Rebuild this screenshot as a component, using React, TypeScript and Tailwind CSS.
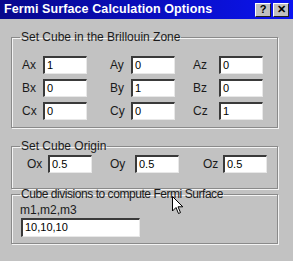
const rows = [
  [
    ["Ax", "1"],
    ["Ay", "0"],
    ["Az", "0"],
  ],
  [
    ["Bx", "0"],
    ["By", "1"],
    ["Bz", "0"],
  ],
  [
    ["Cx", "0"],
    ["Cy", "0"],
    ["Cz", "1"],
  ],
];

function Field({ value, className = "w-[44px] h-[18px]" }: { value: string; className?: string }) {
  return (
    <div
      className={`bg-white border-t-2 border-l-2 border-t-[#3a3a3a] border-l-[#3a3a3a] border-b border-r border-b-[#e8e8e8] border-r-[#e8e8e8] pl-[2px] text-[11px] leading-[15px] text-black ${className}`}
    >
      {value}
    </div>
  );
}

function Group({
  title,
  className,
  legendClass = "",
  children,
}: {
  title: string;
  className: string;
  legendClass?: string;
  children: React.ReactNode;
}) {
  return (
    <fieldset
      className={`mx-[11px] w-[267px] border border-[#8a8a8a] shadow-[1px_1px_0_#f4f4f4,inset_1px_1px_0_#f4f4f4] ${className}`}
    >
      <legend className={`ml-[8px] px-[1px] text-[12px] leading-[12px] text-[#1a1a1a] ${legendClass}`}>{title}</legend>
      {children}
    </fieldset>
  );
}

function TitleButton({ children }: { children: React.ReactNode }) {
  return (
    <div className="w-[16px] h-[14px] bg-[#c0c0c0] border border-t-white border-l-white border-b-[#202020] border-r-[#202020] flex items-center justify-center text-[11px] font-bold leading-none text-black">
      {children}
    </div>
  );
}

export default function App() {
  return (
    <div
      className="relative w-[293px] h-[261px] overflow-hidden bg-[#c2c2c2]"
      style={{ fontFamily: '"Liberation Sans", Arial, sans-serif' }}
    >
      <div className="h-[19px] flex items-center justify-between pl-[4px] pr-[4px] bg-gradient-to-r from-[#08088c] to-[#0a14f0]">
        <span className="text-white font-bold text-[12.5px] tracking-[0.1px]">Fermi Surface Calculation Options</span>
        <div className="flex gap-[2px]">
          <TitleButton>?</TitleButton>
          <TitleButton>✕</TitleButton>
        </div>
      </div>

      <div className="flex flex-col pt-[12px]">
        <Group title="Set Cube in the Brillouin Zone" className="h-[97px] pt-[13px]">
          <div className="flex flex-col gap-[5px]">
            {rows.map((row, i) => (
              <div key={i} className="flex items-center pl-[10px] text-[12px] text-[#1a1a1a]">
                <span className="w-[21px]">{row[0][0]}</span>
                <Field value={row[0][1]} />
                <span className="ml-[23px] w-[21px]">{row[1][0]}</span>
                <Field value={row[1][1]} />
                <span className="ml-[18px] w-[26px]">{row[2][0]}</span>
                <Field value={row[2][1]} />
              </div>
            ))}
          </div>
        </Group>

        <Group title="Set Cube Origin" className="mt-[12px] h-[49px] pt-[3px]">
          <div className="flex items-center pl-[15px] text-[12px] text-[#1a1a1a]">
            <span className="w-[21px]">Ox</span>
            <Field value="0.5" />
            <span className="ml-[18px] w-[25px]">Oy</span>
            <Field value="0.5" />
            <span className="ml-[24px] w-[20px]">Oz</span>
            <Field value="0.5" />
          </div>
        </Group>

        <Group
          title="Cube divisions to compute Fermi Surface"
          className="-mt-[1px] h-[56px] pt-[3px]"
          legendClass="tracking-[-0.45px]"
        >
          <div className="pl-[8px]">
            <div className="text-[12px] leading-[14px] text-[#1a1a1a]">m1,m2,m3</div>
            <Field value="10,10,10" className="mt-[1px] w-[119px] h-[19px] ml-[1px]" />
          </div>
        </Group>
      </div>

      <svg className="absolute left-[172px] top-[196px]" width="12" height="19" viewBox="0 0 12 19">
        <path d="M0.5 0.5 L0.5 15 L4 11.5 L6.5 17.5 L8.5 16.6 L6 10.8 L10.8 10.8 Z" fill="white" stroke="black" strokeWidth="1" />
      </svg>
    </div>
  );
}
